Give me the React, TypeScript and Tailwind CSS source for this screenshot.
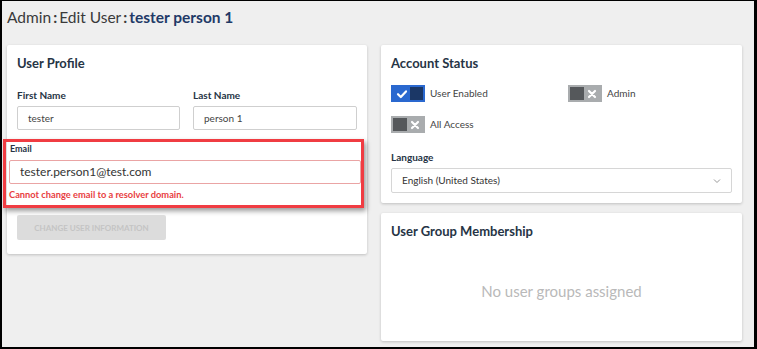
import React from "react";

function ToggleOn() {
  return (
    <div className="flex h-[17px] w-[34px] items-center justify-between bg-[#2a68cf] px-[2px]">
      <svg width="14" height="12" viewBox="0 0 14 12" className="ml-[2px]">
        <path d="M3 6.2 L5.8 9 L11 3.4" stroke="white" strokeWidth="2.2" fill="none" strokeLinecap="round" strokeLinejoin="round" />
      </svg>
      <div className="h-[13px] w-[13px] bg-[#1b3766]" />
    </div>
  );
}

function ToggleOff() {
  return (
    <div className="flex h-[17px] w-[34px] items-center justify-between bg-[#a9acae] px-[2px]">
      <div className="h-[13px] w-[14px] bg-[#55585b]" />
      <svg width="14" height="12" viewBox="0 0 14 12" className="mr-[1px]">
        <path d="M4 3 L10 9 M10 3 L4 9" stroke="white" strokeWidth="2.2" fill="none" strokeLinecap="round" />
      </svg>
    </div>
  );
}

export default function App() {
  return (
    <div
      className="h-[349px] w-[757px] overflow-hidden border-t-[1px] border-l-[2px] border-r-[3px] border-b-[2px] border-black bg-[#efefef] text-[#333]"
      style={{ fontFamily: "Lato, 'Open Sans', sans-serif" }}
    >
      <div className="flex h-[32px] items-center pl-[5px] text-[15.5px] leading-[20px] text-[#3a3a3a]">
        <span>Admin</span>
        <span className="mx-[2px] font-bold">:</span>
        <span>Edit User</span>
        <span className="mx-[2px] font-bold">:</span>
        <span className="font-bold text-[#1f3a67]">tester person 1</span>
      </div>
      <div className="mt-[12px] flex gap-[14px] pl-[5px]">
        <div className="w-[360px] self-start rounded-[2px] bg-white px-[10px] pt-[9px] pb-[14px] shadow-[0_1px_3px_rgba(0,0,0,0.2)]">
          <div className="text-[13px] font-bold leading-[18px] text-[#263445]">User Profile</div>
          <div className="mt-[16px] flex gap-[13px]">
            <div className="flex w-[163px] flex-col">
              <div className="text-[10px] font-bold leading-[14px] text-[#263445]">First Name</div>
              <div className="mt-[4px] flex h-[24px] items-center rounded-[2px] border border-[#cfcfcf] pl-[10px] text-[10px] text-[#444]">tester</div>
            </div>
            <div className="flex w-[164px] flex-col">
              <div className="text-[10px] font-bold leading-[14px] text-[#263445]">Last Name</div>
              <div className="mt-[4px] flex h-[24px] items-center rounded-[2px] border border-[#cfcfcf] pl-[10px] text-[10px] text-[#444]">person 1</div>
            </div>
          </div>
          <div className="mt-[9px] ml-[-14px] mr-[-7px] border-[3px] border-[#f03c42] pl-[3px] pr-[0px] pt-[1px] shadow-[2px_3px_5px_rgba(0,0,0,0.4)]">
            <div className="pl-[1px] text-[9px] font-bold leading-[12px] text-[#263445]">Email</div>
            <div className="mt-[5px] flex h-[24px] items-center rounded-[2px] border border-[#eaa4a4] pl-[10px] text-[12px] text-[#333]">tester.person1@test.com</div>
            <div className="mt-[5px] pb-[4px] pl-[0px] text-[9.3px] font-bold leading-[12px] text-[#e8403f]">Cannot change email to a resolver domain.</div>
          </div>
          <div className="mt-[7px] flex h-[25px] w-[149px] items-center justify-center rounded-[2px] bg-[#dcdcdc] text-[8px] font-bold text-[#c4c4c4]">
            CHANGE USER INFORMATION
          </div>
        </div>
        <div className="flex w-[361px] flex-col gap-[10px]">
          <div className="rounded-[2px] bg-white px-[10px] pt-[9px] pb-[10px] shadow-[0_1px_3px_rgba(0,0,0,0.2)]">
            <div className="text-[13px] font-bold leading-[18px] text-[#263445]">Account Status</div>
            <div className="mt-[13px] flex">
              <div className="flex w-[177px] items-center gap-[5px]">
                <ToggleOn />
                <span className="text-[10px] text-[#444]">User Enabled</span>
              </div>
              <div className="flex items-center gap-[5px]">
                <ToggleOff />
                <span className="text-[10px] text-[#444]">Admin</span>
              </div>
            </div>
            <div className="mt-[14px] flex items-center gap-[5px]">
              <ToggleOff />
              <span className="text-[10px] text-[#444]">All Access</span>
            </div>
            <div className="mt-[18px] text-[10px] font-bold leading-[12px] text-[#263445]">Language</div>
            <div className="mt-[5px] flex h-[25px] items-center justify-between rounded-[2px] border border-[#d6d6d6] pl-[10px] pr-[10px] text-[10px] text-[#333]">
              <span>English (United States)</span>
              <svg width="8" height="6" viewBox="0 0 8 6">
                <path d="M1 1.5 L4 4.5 L7 1.5" stroke="#999" strokeWidth="1" fill="none" />
              </svg>
            </div>
          </div>
          <div className="flex h-[128px] flex-col rounded-[2px] bg-white px-[10px] pt-[9px] shadow-[0_1px_3px_rgba(0,0,0,0.2)]">
            <div className="text-[13px] font-bold leading-[18px] text-[#263445]">User Group Membership</div>
            <div className="mt-[42px] text-center text-[15px] leading-[18px] text-[#b9b9b9]">No user groups assigned</div>
          </div>
        </div>
      </div>
    </div>
  );
}
